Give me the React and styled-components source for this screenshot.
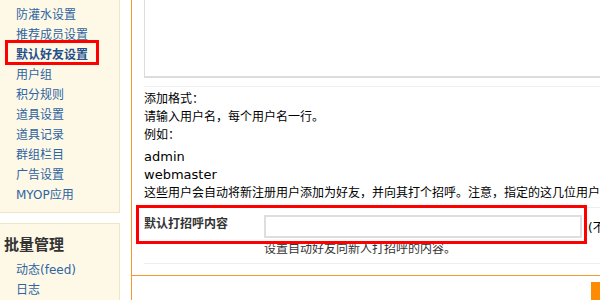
import React from 'react';
import styled, { createGlobalStyle } from 'styled-components';

const GlobalStyle = createGlobalStyle`
  html, body {
    margin: 0;
    padding: 0;
    background: #fff;
    overflow: hidden;
  }
  body {
    font: 12px "DejaVu Sans", "Noto Sans CJK SC", sans-serif;
    color: #000;
  }
`;

const Layout = styled.div`
  display: flex;
  align-items: stretch;
  width: 820px;
  height: 320px;
  margin-top: -20px;
`;

const Sidebar = styled.div`
  width: 120px;
  flex-shrink: 0;
  display: flex;
  flex-direction: column;
  gap: 10px;
`;

const SidePanel = styled.div`
  background: #fef9e7;
  border: 1px solid #f1e6c3;
  border-left: none;
  padding: ${(p) => p.$pad || '0 0 7px'};
`;

const SideTitle = styled.h3`
  margin: 0;
  padding-left: 4px;
  font-size: 15px;
  line-height: 22px;
  font-weight: bold;
  color: #333;
`;

const SideList = styled.ul`
  list-style: none;
  margin: 0;
  padding: 0;
`;

const SideItem = styled.li`
  position: relative;
  padding-left: 16px;
  line-height: 20px;
  color: ${(p) => (p.$active ? '#1f4f8c' : '#2d64a3')};
  font-weight: ${(p) => (p.$active ? 'bold' : 'normal')};
  white-space: nowrap;

  ${(p) =>
    p.$active &&
    `
    &::after {
      content: '';
      position: absolute;
      left: 5px;
      top: -5px;
      width: 88px;
      height: 19px;
      border: 3px solid #f00;
    }
  `}
`;

const Main = styled.div`
  flex: 1;
  min-width: 0;
  margin-left: 11px;
  border-left: 1px solid #f39a2b;
`;

const FormBox = styled.div`
  border-bottom: 1px solid #f39a2b;
  padding: 0 0 11px 12px;
`;

const TextArea = styled.div`
  width: 640px;
  height: 96px;
  border: 1px solid #dcdcdc;
  border-top: none;
  border-bottom-width: 2px;
  background: #fff;
`;

const Rule = styled.div`
  height: 1px;
  background: #eeeeee;
  margin: ${(p) => p.$margin || '0'};
`;

const Tips = styled.div`
  padding-top: 3px;
  line-height: 18px;
  white-space: nowrap;
`;

const Sample = styled.div`
  margin-top: 4px;
  line-height: 18px;
  font-size: 13px;
`;

const TipsEnd = styled.div`
  margin: 1px 0 5px;
  line-height: 17px;
  white-space: nowrap;
`;

const Row = styled.div`
  position: relative;
  display: grid;
  grid-template-columns: 120px 1fr;
  padding-top: 7px;
`;

const Label = styled.div`
  font-weight: bold;
  color: #333;
  line-height: 18px;
`;

const Field = styled.div`
  display: flex;
  flex-direction: column;
`;

const InputLine = styled.div`
  display: flex;
  align-items: center;
  gap: 6px;
  white-space: nowrap;
`;

const Input = styled.div`
  width: 314px;
  height: 19px;
  border: 2px solid #dedede;
  background: #fff;
`;

const Hint = styled.div`
  margin-top: 4px;
  line-height: 14px;
  color: #333;
  white-space: nowrap;
`;

const Highlight = styled.div`
  position: absolute;
  left: -8px;
  top: -3px;
  width: 445px;
  height: 33px;
  border: 3px solid #f00;
  pointer-events: none;
`;

const ButtonBar = styled.div`
  display: flex;
  padding: 6px 0 0 459px;
`;

const SubmitButton = styled.div`
  flex: 0 0 60px;
  height: 24px;
  background: #ff8c00;
`;

const navItems = [
  '防灌水设置',
  '推荐成员设置',
  '默认好友设置',
  '用户组',
  '积分规则',
  '道具设置',
  '道具记录',
  '群组栏目',
  '广告设置',
  'MYOP应用',
];

const batchItems = ['动态(feed)', '日志'];

export default function App() {
  return (
    <>
      <GlobalStyle />
      <Layout>
        <Sidebar>
          <SidePanel $pad="24px 0 7px">
            <SideList>
              {navItems.map((name) => (
                <SideItem key={name} $active={name === '默认好友设置'}>
                  {name}
                </SideItem>
              ))}
            </SideList>
          </SidePanel>
          <SidePanel $pad="10px 0 20px">
            <SideTitle>批量管理</SideTitle>
            <SideList style={{ marginTop: 4 }}>
              {batchItems.map((name) => (
                <SideItem key={name}>{name}</SideItem>
              ))}
            </SideList>
          </SidePanel>
        </Sidebar>
        <Main>
          <FormBox>
            <TextArea />
            <Rule $margin="8px 0 0" />
            <Tips>
              添加格式：<br />
              请输入用户名，每个用户名一行。<br />
              例如：
            </Tips>
            <Sample>
              admin<br />
              webmaster
            </Sample>
            <TipsEnd>这些用户会自动将新注册用户添加为好友，并向其打个招呼。注意，指定的这几位用户必须是已经存在的用户</TipsEnd>
            <Rule />
            <Row>
              <Label>默认打招呼内容</Label>
              <Field>
                <InputLine>
                  <Input />
                  <span>(不超过100个字)</span>
                </InputLine>
                <Hint>设置自动好友向新人打招呼的内容。</Hint>
              </Field>
              <Highlight />
            </Row>
            <Rule $margin="7px 0 0" />
          </FormBox>
          <ButtonBar>
            <SubmitButton />
          </ButtonBar>
        </Main>
      </Layout>
    </>
  );
}
